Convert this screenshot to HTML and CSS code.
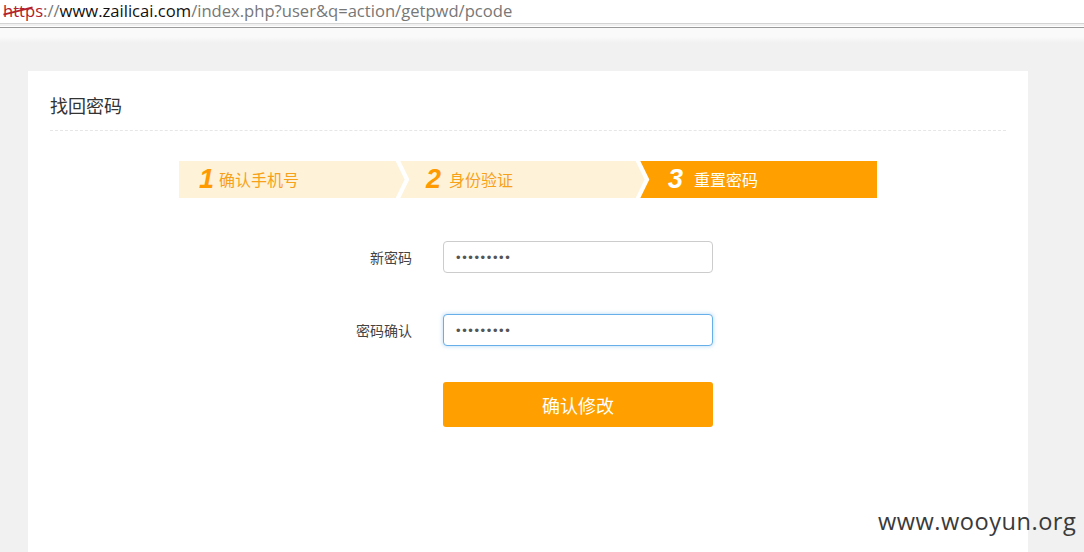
FILE: index.html
```html
<!DOCTYPE html>
<html lang="zh-CN">
<head>
<meta charset="utf-8">
<title>找回密码</title>
<link rel="stylesheet" href="styles.css">
</head>
<body>
<div class="addr">
  <div class="url"><span class="proto">https</span><span class="sep">://</span><span class="host">www.zailicai.com</span><span class="path">/index.php?user&amp;q=action/getpwd/pcode</span></div>
</div>
<div class="chrome-line"></div>
<div class="page">
  <div class="card">
    <div class="title">找回密码</div>
    <div class="steps">
      <div class="step step1"><span class="num">1</span><span class="label">确认手机号</span></div>
      <div class="step step2">
        <svg class="chev" width="16" height="37" viewBox="0 0 16 37"><polyline points="2.5,-1 12,18.5 2.5,38" fill="none" stroke="#fff" stroke-width="4.2"/></svg>
        <span class="num">2</span><span class="label">身份验证</span></div>
      <div class="step step3">
        <svg class="chev" width="16" height="37" viewBox="0 0 16 37"><polygon points="0,0 2.5,0 12,18.5 2.5,37 0,37" fill="#fef3d9"/><polyline points="2.5,-1 12,18.5 2.5,38" fill="none" stroke="#fff" stroke-width="4.2"/></svg>
        <span class="num">3</span><span class="label">重置密码</span></div>
    </div>
    <form class="form">
      <label class="flabel" for="p1">新密码</label>
      <input class="finput" id="p1" type="password" value="123456789">
      <label class="flabel" for="p2">密码确认</label>
      <input class="finput focus" id="p2" type="password" value="123456789">
      <span></span>
      <button class="submit" type="button">确认修改</button>
    </form>
  </div>
</div>
<div class="watermark">www.wooyun.org</div>
</body>
</html>
```

FILE: styles.css
```css
html, body {
  margin: 0;
  padding: 0;
  height: 100%;
  overflow: hidden;
}
body {
  background: #f1f1f1;
  font-family: "Noto Sans CJK SC", "Noto Sans", sans-serif;
  position: relative;
}
.addr {
  background: #fff;
  height: 24px;
  border-bottom: 1px solid #d4d4d4;
  box-sizing: border-box;
}
.url {
  font-family: "Open Sans", "Noto Sans", sans-serif;
  font-size: 16.6px;
  line-height: 22px;
  padding-left: 3px;
  white-space: nowrap;
}
.proto {
  color: #b2202a;
  position: relative;
}
.proto::after {
  content: "";
  position: absolute;
  left: 0;
  top: 11px;
  width: 30px;
  height: 2px;
  background: #b2202a;
  transform: rotate(-14deg);
}
.sep, .path { color: #777; }
.host { color: #111; }
.chrome-line {
  height: 16px;
  border-top: 1px solid #fff;
  background: linear-gradient(#9a9a9a 0, #9a9a9a 1px, #fafafa 1px, #fafafa 60%, #f1f1f1 100%);
  margin-top: 2px;
}
.page {
  padding: 28px 0 0 28px;
}
.card {
  background: #fff;
  width: 956px;
  height: 459px;
  padding: 22px 22px 0;
}
.title {
  font-size: 18px;
  line-height: 24px;
  color: #333;
  padding-bottom: 13px;
  border-bottom: 1px dashed #e6e6e6;
}
.steps {
  display: flex;
  width: 698px;
  margin: 30px auto 0;
  height: 37px;
}
.step {
  position: relative;
  display: flex;
  align-items: center;
  background: #fef3d9;
  color: #f7a11a;
  box-sizing: border-box;
}
.step1 { width: 216px; padding-left: 20px; }
.step2 { width: 240px; padding-left: 31px; }
.step3 { width: 242px; padding-left: 33px; background: #ff9f00; color: #fff; }
.chev {
  position: absolute;
  left: 0;
  top: 0;
}
.num {
  font-family: "Liberation Sans", Arial, sans-serif;
  font-weight: bold;
  font-style: italic;
  font-size: 27px;
  line-height: 37px;
  color: #ff9a00;
  margin-right: 5px;
}
.step2 .num { margin-right: 8px; }
.step3 .num { color: #fff; margin-right: 11px; }
.label {
  font-size: 16px;
  line-height: 37px;
}
.form {
  display: grid;
  grid-template-columns: 362px 270px;
  column-gap: 31px;
  align-items: center;
  margin-top: 43px;
}
.flabel {
  text-align: right;
  font-size: 14px;
  color: #444;
}
.finput {
  box-sizing: border-box;
  width: 270px;
  height: 32px;
  border: 1px solid #ccc;
  border-radius: 4px;
  padding: 0 12px;
  font-size: 13px;
  letter-spacing: 1.6px;
  color: #555;
  font-family: "Liberation Sans", Arial, sans-serif;
  outline: none;
  margin: 0;
}
.finput + .flabel { margin-top: 41px; }
.finput.focus {
  margin-top: 41px;
  border-color: #66afe9;
  box-shadow: 0 0 4px rgba(102, 175, 233, 0.5);
}
.submit {
  margin-top: 36px;
  width: 270px;
  height: 45px;
  border: 0;
  border-radius: 3px;
  background: #ff9f00;
  color: #fff;
  font-family: "Noto Sans CJK SC", sans-serif;
  font-size: 18px;
  padding: 0;
}
.watermark {
  position: absolute;
  left: 878px;
  top: 505px;
  font-family: "Open Sans", "DejaVu Sans", sans-serif;
  font-size: 23.6px;
  color: #3a3a3a;
  letter-spacing: 0.5px;
}
```
